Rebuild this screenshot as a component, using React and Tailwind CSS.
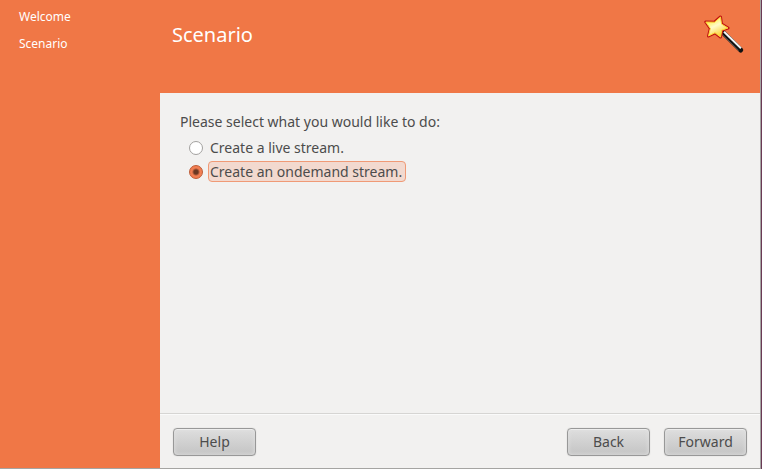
import { useState } from "react";

const steps = ["Welcome", "Scenario"];

const options = [
  { id: "live", label: "Create a live stream." },
  { id: "ondemand", label: "Create an ondemand stream." },
];

function WandIcon() {
  return (
    <svg width="44" height="44" viewBox="0 0 44 44" fill="none" aria-hidden="true">
      <defs>
        <linearGradient id="star" x1="0.2" y1="0.1" x2="0.7" y2="1">
          <stop offset="0" stopColor="#ffee3c" />
          <stop offset="0.4" stopColor="#fffbc8" />
          <stop offset="1" stopColor="#fbc81c" />
        </linearGradient>
      </defs>
      <path d="M19 20.500 L36.700 38" stroke="#111" strokeWidth="5" strokeLinecap="round" />
      <path d="M20 19.700 L37 36.200" stroke="#f4f4f4" strokeWidth="2" />
      <path d="M18 22.200 L34.700 38.500" stroke="#666" strokeWidth="0.800" />
      <path
        d="M16.500 5 L17.500 12 L24 16 L17.800 18.200 L16.500 25 L11 20.800 L4.500 24 L6.300 16.500 L1.800 10 L10.500 10.200 Z"
        fill="url(#star)"
        stroke="#c01212"
        strokeWidth="3"
        strokeLinejoin="round"
      />
      <path
        d="M16.500 5 L17.500 12 L24 16 L17.800 18.200 L16.500 25 L11 20.800 L4.500 24 L6.300 16.500 L1.800 10 L10.500 10.200 Z"
        fill="url(#star)"
        stroke="#fcd535"
        strokeWidth="1"
        strokeLinejoin="round"
      />
    </svg>
  );
}

function WizardButton({ children }) {
  return (
    <button
      type="button"
      className="h-7 w-[83px] rounded-[4px] border border-[#989898] bg-linear-to-b from-[#dedede] to-[#c4c4c4] text-[14px] leading-5 text-[#4c4c4c] shadow-[inset_0_1px_0_#ededed,inset_0_0_4px_#e2e2e2,0_0_1px_#bbb]"
    >
      {children}
    </button>
  );
}

export default function App() {
  const [choice, setChoice] = useState("ondemand");

  return (
    <div className="flex min-h-screen border-r border-[#6a3a55] bg-[#f07746] font-['Noto_Sans',sans-serif] text-[14px] leading-5 text-[#4c4c4c]">
      <div className="flex grow border-r border-b border-[#a5a4a2]">
        <nav className="w-40 shrink-0 px-[19px] py-2 text-[12px] leading-[18px] text-white">
          <ol className="flex flex-col gap-[9px]">
            {steps.map((step) => (
              <li key={step}>{step}</li>
            ))}
          </ol>
        </nav>
        <div className="flex min-w-0 grow flex-col">
          <header className="flex h-[93px] items-start justify-between pt-3 pr-3 pl-3 text-white">
            <h1 className="pt-[9px] text-[20px] leading-7">Scenario</h1>
            <WandIcon />
          </header>
          <main className="grow bg-[#f2f1f0] px-5 pt-[19px]">
            <fieldset>
              <legend>Please select what you would like to do:</legend>
              <div className="flex flex-col items-start gap-[3px] pt-[5px] pl-[9px]">
                {options.map(({ id, label }) => (
                  <label key={id} className="flex items-center gap-[5px]">
                    <input
                      type="radio"
                      name="scenario"
                      value={id}
                      checked={choice === id}
                      onChange={() => setChoice(id)}
                      className="peer size-[14px] appearance-none rounded-full border border-[#a3a19f] bg-white checked:border-[#bd5a34] checked:bg-radial checked:from-[#6b3823] checked:from-[2px] checked:to-[#f27e52] checked:to-[4px]"
                    />
                    <span className="rounded-[4px] border border-transparent pr-[3px] pl-px leading-[19px] peer-checked:border-[#f09a76] peer-checked:bg-[#f2d9cf]">
                      {label}
                    </span>
                  </label>
                ))}
              </div>
            </fieldset>
          </main>
          <footer className="flex justify-between border-t border-[#d6d5d3] bg-[#f2f1f0] px-[13px] pt-[14px] pb-3 shadow-[inset_0_1px_0_#fafafa]">
            <WizardButton>Help</WizardButton>
            <div className="flex gap-[14px]">
              <WizardButton>Back</WizardButton>
              <WizardButton>Forward</WizardButton>
            </div>
          </footer>
        </div>
      </div>
    </div>
  );
}
